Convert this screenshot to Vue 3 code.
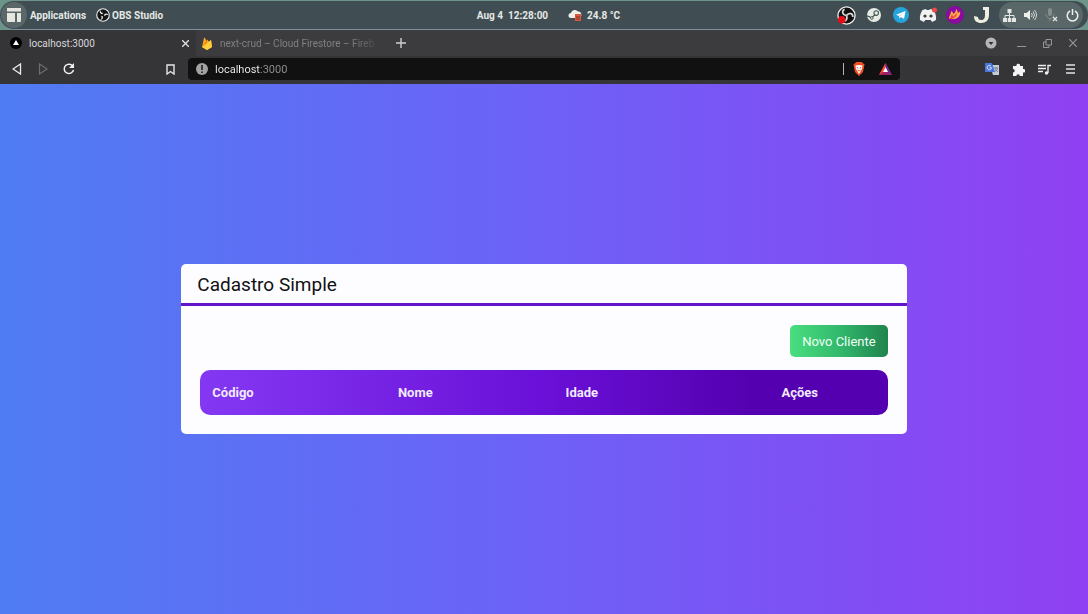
<script setup>
import { ref } from 'vue'

const address = ref('localhost:3000')
const columns = [
  { key: 'code', label: 'Código' },
  { key: 'name', label: 'Nome' },
  { key: 'age', label: 'Idade' },
  { key: 'actions', label: 'Ações' },
]
</script>

<template>
  <div class="desktop">
    <header class="panel">
      <div class="panel-left">
        <button class="launcher" aria-label="Activities">
          <svg width="16" height="16" viewBox="0 0 16 16" fill="#e6e6e0">
            <path d="M1 1h14v3.500H1zM1 6h8v9H2a1 1 0 0 1-1-1zM11 6h4v8a1 1 0 0 1-1 1h-3z" />
          </svg>
        </button>
        <button class="panel-item">Applications</button>
        <button class="panel-item obs-item">
          <svg width="14" height="14" viewBox="0 0 20 20">
            <circle cx="10" cy="10" r="9" fill="#151515" stroke="#ececec" stroke-width="1.600" />
            <g fill="#ececec">
              <path d="M9 9C5 8 4.500 5 6.500 3c-.5 3 1.500 4 4 4.200A3 3 0 0 0 9 9z" />
              <path d="M9 9C5 8 4.500 5 6.500 3c-.5 3 1.500 4 4 4.200A3 3 0 0 0 9 9z" transform="rotate(120 10 10)" />
              <path d="M9 9C5 8 4.500 5 6.500 3c-.5 3 1.500 4 4 4.200A3 3 0 0 0 9 9z" transform="rotate(240 10 10)" />
            </g>
          </svg>
          OBS Studio
        </button>
      </div>
      <div class="panel-center">
        <button class="panel-item clock"><span>Aug 4</span><span>12:28:00</span></button>
        <button class="panel-item weather">
          <svg width="15" height="13" viewBox="0 0 15 13">
            <path d="M3 9a2.500 2.500 0 0 1 0-5 4 4 0 0 1 7-1.500A3 3 0 0 1 12 8v1z" fill="#eeeeea" />
            <path d="M7 5h6v7H7z" fill="#d9573f" />
            <path d="M9 7v4M11 7v4" stroke="#8e3024" />
          </svg>
          24.8 °C
        </button>
      </div>
      <div class="panel-right">
        <button class="tray" aria-label="OBS recording">
          <svg width="19" height="19" viewBox="0 0 20 20">
            <circle cx="10" cy="10" r="9" fill="#111" stroke="#f0f0f0" stroke-width="1.400" />
            <g fill="none" stroke="#d8d8d8" stroke-width="1.800">
              <path d="M10 10C5 9 5 5 8 3.500" />
              <path d="M10 10C5 9 5 5 8 3.500" transform="rotate(120 10 10)" />
              <path d="M10 10C5 9 5 5 8 3.500" transform="rotate(240 10 10)" />
            </g>
            <circle cx="5" cy="14.500" r="4" fill="#e40d18" />
          </svg>
        </button>
        <button class="tray" aria-label="Steam">
          <svg width="14" height="14" viewBox="0 0 16 16">
            <circle cx="8" cy="8" r="8" fill="#e7ebe5" />
            <path d="M0 9l5 2 4-3" fill="none" stroke="#3f514e" stroke-width="1.300" />
            <circle cx="10.500" cy="5.800" r="2.600" fill="#e7ebe5" stroke="#3f514e" stroke-width="1.200" />
            <circle cx="5.500" cy="11.500" r="1.500" fill="#e7ebe5" stroke="#3f514e" />
          </svg>
        </button>
        <button class="tray" aria-label="Telegram">
          <svg width="16" height="16" viewBox="0 0 16 16">
            <circle cx="8" cy="8" r="8" fill="#27a3dc" />
            <path d="M3 7.800L12.500 4 11 12 8 10 6.500 11.500 6 9z" fill="#fff" />
            <path d="M6 9l4.500-3.500L7 9.500z" fill="#a9cfe3" />
          </svg>
        </button>
        <button class="tray" aria-label="Discord">
          <svg width="18" height="16" viewBox="0 0 18 16">
            <path d="M3.500 3L7 2l.7 1h2.600L11 2l3.500 1C16.500 6 17.500 9 17 13l-4 2-1.200-2H6.200L5 15l-4-2C.5 9 1.500 6 3.500 3z" fill="#f1f2f1" />
            <circle cx="6" cy="9" r="1.600" fill="#34413f" />
            <circle cx="12" cy="9" r="1.600" fill="#34413f" />
            <circle cx="15.500" cy="3" r="2.500" fill="#f04747" />
          </svg>
        </button>
        <button class="tray" aria-label="Flameshot">
          <svg width="18" height="18" viewBox="0 0 18 18">
            <circle cx="9" cy="9" r="9" fill="#8b0aa2" />
            <path d="M3 13c0-4 2-4 2-8 2 1 2 2 2.500 3C9 7 10 5 10 3c2 2 1.500 3 2 4 1-.5 1.500-1 2-2 1 4-2 8-6 8-2 0-4 0-5 0z" fill="#ffad42" />
            <path d="M3 13c2-1 2-3 3-5l1 3 4-4c0 4-4 6-8 6z" fill="#ed3e50" />
          </svg>
        </button>
        <button class="tray" aria-label="JDownloader">
          <svg width="16" height="16" viewBox="0 0 16 16">
            <path d="M9 0h6v8c0 5-3 8-8 8-4 0-7-2-7-7l4 1c0 2 1 3 3 3 3 0 4-2 4-5V3H9z" fill="#efeee0" />
          </svg>
        </button>
        <div class="system">
          <button class="status" aria-label="Network">
            <svg width="13" height="13" viewBox="0 0 13 13">
              <path d="M4.500 0h4v4h-4zM0 9h4v4H0zM4.800 9h3.500v4H4.800zM9 9h4v4H9z" fill="#e4e7e3" />
              <path d="M6.500 4v5M2 9V6.500h9V9" fill="none" stroke="#e4e7e3" />
            </svg>
          </button>
          <button class="status" aria-label="Volume">
            <svg width="13" height="12" viewBox="0 0 13 12">
              <path d="M0 4h2.500L6 1v10L2.500 8H0z" fill="#eceeea" />
              <path d="M7.500 4q1.500 2 0 4M9 2.500q3 3.500 0 7M10.500 1q4 5 0 10" fill="none" stroke="#d6d9d5" />
            </svg>
          </button>
          <button class="status" aria-label="Microphone muted">
            <svg width="13" height="14" viewBox="0 0 13 14" fill="none">
              <rect x="3" y="0" width="4" height="8" rx="2" fill="#848d8a" />
              <path d="M1 6c0 6 8 6 8 0M5 10v3" stroke="#848d8a" />
              <path d="M8 9l4 4M12 9l-4 4" stroke="#dfe2de" stroke-width="1.400" />
            </svg>
          </button>
          <button class="status" aria-label="Power">
            <svg width="13" height="13" viewBox="0 0 13 13" fill="none" stroke="#eff0ed" stroke-width="1.500">
              <path d="M4 2a5.300 5.300 0 1 0 5 0M6.500 0v6" />
            </svg>
          </button>
        </div>
      </div>
    </header>

    <div class="browser">
      <nav class="tabs">
        <div class="tab active">
          <svg class="favicon" width="12" height="12" viewBox="0 0 12 12">
            <circle cx="6" cy="6" r="6" fill="#000" />
            <path d="M6 3l3 5H3z" fill="#fff" />
          </svg>
          <a class="tab-title" href="#">localhost:3000</a>
          <button class="icon" aria-label="Close tab">
            <svg width="7" height="7" viewBox="0 0 7 7" stroke="#e2e2e2" stroke-width="1.300"><path d="M0 0l7 7M7 0L0 7" /></svg>
          </button>
        </div>
        <div class="tab">
          <svg class="favicon" width="12" height="13" viewBox="0 0 12 13">
            <path d="M1 10L3 1q.5-1 1 0l1.500 3 1-1.500L8 5l2-2 1 7-5 3z" fill="#f9a825" />
            <path d="M1 10L5.500 4l1 2z" fill="#f57c00" />
            <path d="M1 10L10 3l1 7-5 3z" fill="#ffcf3d" />
          </svg>
          <a class="tab-title faded" href="#">next-crud – Cloud Firestore – Fireb</a>
        </div>
        <button class="icon new-tab" aria-label="New tab">
          <svg width="10" height="10" viewBox="0 0 10 10" stroke="#d0d0d0" stroke-width="1.400"><path d="M5 0v10M0 5h10" /></svg>
        </button>
        <div class="window-controls">
          <button class="icon search-tabs" aria-label="Search tabs">
            <svg width="12" height="12" viewBox="0 0 12 12"><circle cx="6" cy="6" r="5.500" fill="#b6b6b6" /><path d="M3.500 5h5L6 8z" fill="#303034" /></svg>
          </button>
          <button class="icon" aria-label="Minimize">
            <svg width="9" height="9" viewBox="0 0 9 9" stroke="#96969a"><path d="M0 7.500h9" /></svg>
          </button>
          <button class="icon" aria-label="Restore">
            <svg width="9" height="9" viewBox="0 0 9 9" fill="none" stroke="#96969a"><path d="M3 .5h5.500V6H3zM3 3H.5v5.500H6V6" /></svg>
          </button>
          <button class="icon" aria-label="Close window">
            <svg width="8" height="8" viewBox="0 0 8 8" stroke="#96969a" stroke-width="1.200"><path d="M0 0l8 8M8 0L0 8" /></svg>
          </button>
        </div>
      </nav>

      <div class="toolbar">
        <div class="navigation">
          <button class="icon" aria-label="Back">
            <svg width="10" height="12" viewBox="0 0 10 12" fill="none" stroke="#ededed" stroke-width="1.300"><path d="M8.500 1v10L1 6z" /></svg>
          </button>
          <button class="icon" aria-label="Forward">
            <svg width="10" height="12" viewBox="0 0 10 12" fill="none" stroke="#6d6d70" stroke-width="1.200"><path d="M1.500 1v10L9 6z" /></svg>
          </button>
          <button class="icon" aria-label="Reload">
            <svg width="12" height="12" viewBox="0 0 12 12" fill="none" stroke="#f0f0f0" stroke-width="1.500">
              <path d="M10 3.500A4.700 4.700 0 1 0 10.500 7" /><path d="M11 0v5H6z" fill="#f0f0f0" stroke="none" />
            </svg>
          </button>
          <button class="icon bookmark" aria-label="Bookmark">
            <svg width="9" height="11" viewBox="0 0 9 11" fill="none" stroke="#e6e6e6" stroke-width="1.400"><path d="M1 1h7v9L4.500 7.500 1 10z" /></svg>
          </button>
        </div>
        <div class="address">
          <svg width="12" height="12" viewBox="0 0 12 12"><circle cx="6" cy="6" r="6" fill="#a2a2a2" /><path d="M6 2v5M6 8.500V10" stroke="#181818" stroke-width="1.500" /></svg>
          <input v-model="address" class="url" type="text" aria-label="Address" spellcheck="false" />
          <span class="divider"></span>
          <button class="icon" aria-label="Brave Shields">
            <svg width="12" height="14" viewBox="0 0 12 14">
              <path d="M3 0h6l1 1.500 1.500.5-.5 3-1 5-4 4-4-4-1-5L.5 2 2 1.500z" fill="#ef4e23" />
              <path d="M2.500 3.500L6 3l3.500.5L9 7l-1 1.500L6 12 4 8.500 3 7z" fill="#fff" />
              <path d="M4 5l1 1.500M8 5L7 6.500M4.500 8L6 9l1.500-1" fill="none" stroke="#ef4e23" />
            </svg>
          </button>
          <button class="icon" aria-label="Brave Rewards">
            <svg width="13" height="12" viewBox="0 0 13 12">
              <path d="M6.500 0L0 12h13z" fill="#9e1f63" />
              <path d="M6.500 0L0 12l4-3 2.500-5z" fill="#ff4724" />
              <path d="M6.500 0L13 12 9 9 6.500 4z" fill="#662d91" />
              <path d="M6.500 4L9 9H4z" fill="#fff" />
            </svg>
          </button>
        </div>
        <div class="extensions">
          <button class="icon" aria-label="Translate">
            <svg width="14" height="14" viewBox="0 0 14 14">
              <path d="M5 3h9v10H8z" fill="#c4ccd8" />
              <path d="M0 1h7l3 9H0z" fill="#4a76dc" />
              <path d="M6 4.200a2.200 2.200 0 1 0 .5 1.600H4.500" fill="none" stroke="#e5edff" />
              <path d="M9 6h4M11 5v1M12.500 6c-.5 2-1.500 3-3 4M10 7l3 3" fill="none" stroke="#68717d" stroke-width=".8" />
            </svg>
          </button>
          <button class="icon" aria-label="Extensions">
            <svg width="13" height="13" viewBox="0 0 13 13">
              <path d="M1 3h3.500a1.800 1.800 0 1 1 3.500 0H11v3a1.800 1.800 0 1 1 0 3.500V13H7.800a1.700 1.700 0 0 0-3.400 0H1V9.500A1.700 1.700 0 0 0 1 6z" fill="#f4f4f4" />
            </svg>
          </button>
          <button class="icon" aria-label="Media control">
            <svg width="13" height="11" viewBox="0 0 13 11" fill="none" stroke="#eee" stroke-width="1.400">
              <path d="M0 1.500h8M0 4.500h8M0 7.500h5M10 9V1.500h3" /><circle cx="8.500" cy="9" r="1.700" fill="#eee" stroke="none" />
            </svg>
          </button>
          <button class="icon" aria-label="Menu">
            <svg width="9" height="10" viewBox="0 0 9 10" stroke="#e4e4e4" stroke-width="1.300"><path d="M0 1h9M0 5h9M0 9h9" /></svg>
          </button>
        </div>
      </div>
    </div>

    <main class="page">
      <section class="card">
        <h1 class="title">Cadastro Simple</h1>
        <div class="content">
          <button class="new-client">Novo Cliente</button>
          <table class="clients">
            <thead>
              <tr>
                <th v-for="column in columns" :key="column.key" :class="column.key" scope="col">{{ column.label }}</th>
              </tr>
            </thead>
          </table>
        </div>
      </section>
    </main>
  </div>
</template>

<style>
body {
  margin: 0;
}
</style>

<style scoped>
.desktop {
  min-height: 100vh;
  display: flex;
  flex-direction: column;
  font-family: Roboto, "Liberation Sans", sans-serif;
}

button {
  display: flex;
  align-items: center;
  justify-content: center;
  padding: 0;
  border: 0;
  background: none;
  color: inherit;
  font: inherit;
  white-space: nowrap;
}

svg {
  display: block;
  flex: none;
}

.panel {
  display: grid;
  grid-template-columns: 1fr auto 1fr;
  height: 28px;
  margin-top: 1px;
  border-bottom: 1px solid #7d8f9c;
  border-radius: 14px;
  background: #404e54;
  color: #e6e8e4;
  font-size: 10px;
  font-weight: 700;
  box-shadow: 0 0 0 16px #6c9488;
}

.panel-left,
.panel-center,
.panel-right,
.system,
.tab,
.tabs,
.window-controls,
.toolbar,
.navigation,
.address,
.extensions {
  display: flex;
  align-items: center;
}

.launcher {
  width: 26px;
  height: 26px;
  margin: 0 3px 0 1px;
  border-radius: 50%;
  background: #5a6668;
}

.panel-item {
  gap: 4px;
}

.obs-item {
  gap: 2px;
  margin-left: 10px;
}

.panel-center {
  gap: 20px;
  padding-left: 9px;
}

.clock {
  gap: 5px;
}

.panel-right {
  justify-content: flex-end;
}

.tray {
  width: 27px;
  height: 28px;
}

.system {
  height: 26px;
  margin: 0 5px 0 4px;
  border-radius: 13px;
  background: #596769;
}

.status {
  width: 21px;
  height: 26px;
}

.browser {
  position: relative;
  background: #353538;
  color: #d8d8d8;
}

.tabs {
  height: 26px;
  background: #3c3c3e;
  font-size: 10px;
}

.tab {
  box-sizing: border-box;
  width: 192px;
  height: 26px;
  padding-left: 5px;
}

.tab.active {
  width: 196px;
  padding-left: 10px;
  background: #353538;
}

.favicon {
  margin-right: 7px;
}

.tab-title {
  flex: 1;
  color: inherit;
  text-decoration: none;
  white-space: nowrap;
}

.faded {
  margin-right: 4px;
  color: #808084;
  mask-image: linear-gradient(to right, #000 80%, transparent);
}

.icon {
  width: 26px;
  height: 26px;
  flex: none;
}

.tab .icon {
  width: 22px;
}

.search-tabs {
  margin-right: 4px;
}

.window-controls {
  margin-left: auto;
  padding-right: 2px;
}

.toolbar {
  height: 26px;
  padding-left: 4px;
  padding-bottom: 2px;
}

.navigation {
  width: 184px;
}

.bookmark {
  margin-left: auto;
  margin-right: 5px;
}

.address {
  box-sizing: border-box;
  flex: 1;
  height: 22px;
  padding: 0 2px 0 8px;
  border-radius: 4px;
  background: #111112;
}

.url {
  flex: 1;
  min-width: 0;
  margin-left: 7px;
  padding: 0;
  border: 0;
  outline: 0;
  background: linear-gradient(to right, #f4f4f4 45px, #929292 45px);
  background-clip: text;
  color: transparent;
  font: 11px Roboto, "Liberation Sans", sans-serif;
}

.divider {
  width: 1px;
  height: 12px;
  margin-right: 2px;
  background: #b4b4b4;
}

.extensions {
  margin-left: 79px;
  padding-right: 5px;
}

.page {
  flex: 1;
  display: flex;
  align-items: center;
  justify-content: center;
  background: linear-gradient(to right, #4f7cf2, #6a64f7 45%, #9040f2);
}

.card {
  width: 66.667%;
  border-radius: 5px;
  background: #fdfdff;
  color: #111;
}

.title {
  margin: 0;
  padding: 7px 16px 5px;
  border-bottom: 3px solid #6512cb;
  font-size: 19px;
  font-weight: 400;
  line-height: 27px;
}

.content {
  display: flex;
  flex-direction: column;
  padding: 19px;
}

.new-client {
  align-self: flex-end;
  height: 32px;
  margin-bottom: 13px;
  padding: 0 12px;
  border-radius: 5px;
  background: linear-gradient(to right, #4ade80, #32b96d 50%, #20834e);
  color: #f0fff5;
  font-size: 13px;
}

.clients {
  width: 100%;
  height: 45px;
  table-layout: fixed;
  border-spacing: 0;
  overflow: hidden;
  border-radius: 10px;
  background: linear-gradient(to right, #8438f2, #6a10d8 50%, #5500b0 80%);
  color: #f1eafd;
  font-size: 13px;
}

th {
  box-sizing: border-box;
  padding: 0 12px;
  text-align: left;
  font-weight: 700;
}

.code {
  width: 27%;
}

.name {
  width: 24.4%;
}

.age {
  width: 23%;
}

.actions {
  text-align: center;
}
</style>
